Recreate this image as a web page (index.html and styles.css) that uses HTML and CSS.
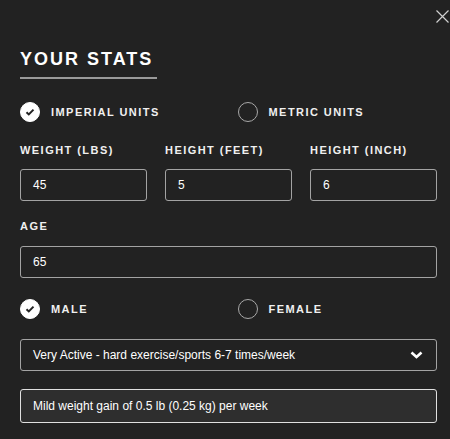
FILE: index.html
```html
<!DOCTYPE html>
<html lang="en">
<head>
<meta charset="utf-8">
<title>Your Stats</title>
<link rel="stylesheet" href="styles.css">
</head>
<body>
<div class="modal">
  <button class="close" aria-label="Close">
    <svg width="13" height="13" viewBox="0 0 13 13"><path d="M0.5 0.5 L12.5 12.5 M12.5 0.5 L0.5 12.5" stroke="#d0d0d0" stroke-width="1.2" fill="none"/></svg>
  </button>
  <div class="content">
    <h2 class="title">YOUR STATS</h2>

    <div class="radio-row units">
      <label class="radio checked"><span class="dot"><svg width="10" height="8" viewBox="0 0 10 8"><path d="M1.5 4.2 L3.8 6.4 L8.5 1.6" stroke="#222" stroke-width="2" fill="none"/></svg></span><span class="rtext">IMPERIAL UNITS</span></label>
      <label class="radio"><span class="dot"></span><span class="rtext">METRIC UNITS</span></label>
    </div>

    <div class="fields3">
      <div class="field"><div class="label">WEIGHT (LBS)</div><div class="input">45</div></div>
      <div class="field"><div class="label">HEIGHT (FEET)</div><div class="input">5</div></div>
      <div class="field"><div class="label">HEIGHT (INCH)</div><div class="input">6</div></div>
    </div>

    <div class="field age"><div class="label">AGE</div><div class="input">65</div></div>

    <div class="radio-row gender">
      <label class="radio checked"><span class="dot"><svg width="10" height="8" viewBox="0 0 10 8"><path d="M1.5 4.2 L3.8 6.4 L8.5 1.6" stroke="#222" stroke-width="2" fill="none"/></svg></span><span class="rtext">MALE</span></label>
      <label class="radio"><span class="dot"></span><span class="rtext">FEMALE</span></label>
    </div>

    <div class="input select">
      <span>Very Active - hard exercise/sports 6-7 times/week</span>
      <svg class="chev" width="13" height="8" viewBox="0 0 13 8"><path d="M1.5 1.5 L6.5 6 L11.5 1.5" stroke="#fff" stroke-width="2.6" fill="none"/></svg>
    </div>

    <div class="input goal">Mild weight gain of 0.5 lb (0.25 kg) per week</div>
  </div>
</div>
</body>
</html>
```

FILE: styles.css
```css
* { box-sizing: border-box; }
html, body { margin: 0; padding: 0; }
body {
  background: #222222;
  color: #ffffff;
  font-family: "Liberation Sans", Arial, sans-serif;
  width: 450px;
  height: 439px;
  overflow: hidden;
}
.modal { position: relative; padding: 0 13px 0 20px; }
.close {
  position: absolute;
  top: 10px;
  right: 1px;
  width: 13px;
  height: 13px;
  padding: 0;
  border: 0;
  background: none;
  display: block;
}
.close svg { display: block; }
.content { width: 417px; padding-top: 48px; }
.title {
  display: inline-block;
  margin: 0;
  font-size: 18px;
  line-height: 22px;
  font-weight: 700;
  letter-spacing: 2px;
  padding-bottom: 7px;
  border-bottom: 2px solid #9a9a9a;
  width: 137px;
  white-space: nowrap;
}
.radio-row {
  display: grid;
  grid-template-columns: 1fr 1fr;
  column-gap: 18px;
  height: 20px;
}
.units { margin-top: 23px; }
.gender { margin-top: 21px; }
.radio { display: flex; align-items: center; gap: 11px; }
.dot {
  width: 20px;
  height: 20px;
  border-radius: 50%;
  border: 1.5px solid #a8a8a8;
  display: flex;
  align-items: center;
  justify-content: center;
  flex: none;
}
.radio.checked .dot { background: #fff; border-color: #fff; }
.dot svg { display: block; }
.rtext, .label {
  font-size: 11px;
  font-weight: 700;
  letter-spacing: 1.45px;
  line-height: 13px;
  color: #f0f0f0;
  white-space: nowrap;
}
.fields3 {
  display: grid;
  grid-template-columns: 127px 127px 127px;
  column-gap: 18px;
  margin-top: 22px;
}
.field .label { margin-bottom: 12px; }
.age { margin-top: 19px; }
.age .label { margin-bottom: 13px; }
.input {
  height: 32px;
  border: 1px solid #a3a3a3;
  border-radius: 3px;
  background: #222222;
  padding: 0 12px;
  font-size: 12px;
  line-height: 30px;
  color: #fff;
  white-space: nowrap;
}
.select {
  margin-top: 20px;
  display: flex;
  align-items: center;
  justify-content: space-between;
  padding-right: 13px;
}
.chev { display: block; }
.goal {
  margin-top: 18px;
  height: 34px;
  line-height: 32px;
  background: #2e2e2e;
  border-color: #e0e0e0;
}
```
